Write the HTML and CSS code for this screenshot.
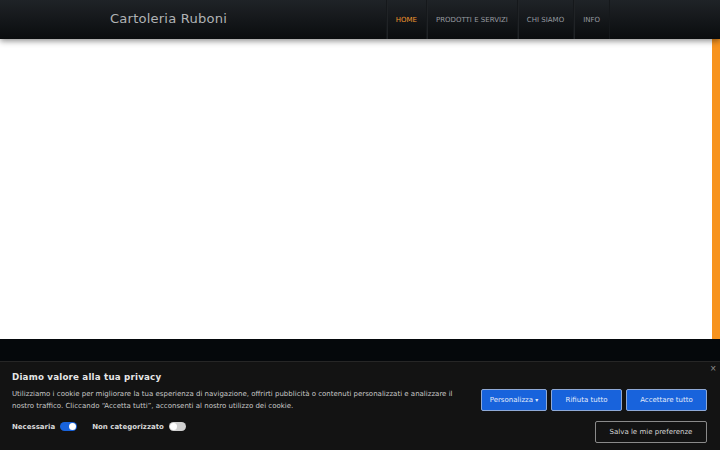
FILE: index.html
```html
<!DOCTYPE html>
<html lang="it">
  <head>
    <meta charset="utf-8">
    <title>Cartoleria Ruboni</title>
    <meta name="viewport" content="width=device-width">
    <link rel="stylesheet" href="styles.css">
  </head>
  <body>
    <header class="top">
      <div class="wrap">
        <h1 class="brand">Cartoleria Ruboni</h1>
        <nav>
          <ul class="menu">
            <li class="active"><a href="#">Home</a></li>
            <li><a href="#">Prodotti e servizi</a></li>
            <li><a href="#">Chi siamo</a></li>
            <li><a href="#">Info</a></li>
          </ul>
        </nav>
      </div>
    </header>

    <main class="page"></main>

    <footer class="bottom"></footer>

    <!-- cookie consent bar -->
    <div class="consent">
      <button class="consent-close" aria-label="Chiudi">&times;</button>
      <div class="consent-text">
        <h2>Diamo valore alla tua privacy</h2>
        <p>Utilizziamo i cookie per migliorare la tua esperienza di navigazione, offrirti pubblicità o contenuti personalizzati e analizzare il nostro traffico. Cliccando “Accetta tutti”, acconsenti al nostro utilizzo dei cookie.</p>
        <div class="prefs">
          <label class="pref">Necessaria <span class="switch on"></span></label>
          <label class="pref">Non categorizzato <span class="switch"></span></label>
        </div>
      </div>
      <div class="consent-actions">
        <div class="row">
          <button class="btn blue">Personalizza <span class="caret">&#9662;</span></button>
          <button class="btn blue">Rifiuta tutto</button>
          <button class="btn blue">Accettare tutto</button>
        </div>
        <div class="row">
          <button class="btn outline">Salva le mie preferenze</button>
        </div>
      </div>
    </div>
  </body>
</html>
```

FILE: styles.css
```css
body {
  margin: 0;
  padding: 0;
  font-family: "DejaVu Sans", sans-serif;
  background-color: #05080b;
}

/* top bar */
.top {
  height: 39px;
  background: linear-gradient(#1f2327, #0a0c0e);
  position: relative;
  z-index: 2;
  box-shadow: 0 2px 6px rgba(0, 0, 0, 0.45);
}

.wrap {
  width: 500px;
  margin: 0 auto;
  display: flex;
  justify-content: space-between;
  align-items: stretch;
  height: 100%;
}

.brand {
  margin: 0;
  font-size: 13.1px;
  font-weight: normal;
  color: #b0b3b5;
  line-height: 38px;
  letter-spacing: 0.2px;
}

.menu {
  list-style: none;
  margin: 0;
  padding: 0;
  display: flex;
  height: 100%;
}

.menu li {
  display: flex;
  align-items: center;
  border-left: 1px solid #15181b;
  box-shadow: inset 1px 0 0 #202326;
}

.menu li:last-child {
  border-right: 1px solid #15181b;
}

.menu a {
  display: block;
  padding: 0 9px;
  font-size: 7px;
  text-transform: uppercase;
  text-decoration: none;
  color: #979ba0;
}

.menu .active a {
  color: #f0962e;
}

/* white page body with the orange strip on the right */
.page {
  height: 300px;
  background-color: #fff;
  border-right: 8px solid #f7931e;
}

.bottom {
  height: 111px;
  background-color: #05080b;
}

/* cookie consent */
.consent {
  position: fixed;
  left: 0;
  right: 0;
  bottom: 0;
  height: 89px;
  background-color: #131313;
  border-top: 1px solid #262626;
  display: flex;
  justify-content: space-between;
  padding: 0 13px 0 12px;
  box-sizing: border-box;
  color: #c9c9c9;
}

.consent-close {
  position: absolute;
  top: 1px;
  right: 4px;
  background: none;
  border: none;
  color: #8d8d8d;
  font-size: 10px;
  padding: 0;
  cursor: pointer;
}

.consent-text {
  width: 450px;
  padding-top: 10px;
}

.consent-text h2 {
  margin: 0 0 6px;
  font-size: 8.7px;
  font-weight: bold;
  color: #e6e6e6;
  letter-spacing: 0.2px;
}

.consent-text p {
  margin: 0;
  font-size: 7px;
  line-height: 12px;
  color: #c8c8c8;
}

.prefs {
  display: flex;
  gap: 15px;
  margin-top: 10px;
}

.pref {
  display: flex;
  align-items: center;
  gap: 5px;
  font-size: 7px;
  font-weight: bold;
  color: #d9d9d9;
}

.switch {
  width: 17px;
  height: 9px;
  border-radius: 5px;
  background-color: #d0d0d0;
  position: relative;
}

.switch::after {
  content: "";
  position: absolute;
  top: 1px;
  left: 1px;
  width: 7px;
  height: 7px;
  border-radius: 50%;
  background-color: #fff;
}

.switch.on {
  background-color: #1863dc;
}

.switch.on::after {
  left: 9px;
}

.consent-actions {
  display: flex;
  flex-direction: column;
  align-items: flex-end;
  gap: 10px;
  padding-top: 27px;
}

.row {
  display: flex;
  gap: 4px;
}

.btn {
  height: 22px;
  font-family: "DejaVu Sans", sans-serif;
  font-size: 7px;
  padding: 0 6px;
  border-radius: 2px;
  white-space: nowrap;
  cursor: pointer;
}

.btn.blue {
  background-color: #1863dc;
  border: 1px solid #8fa9d6;
  color: #e4ecfa;
}

.row .btn.blue:nth-child(1) {
  width: 66px;
}

.row .btn.blue:nth-child(2) {
  width: 71px;
}

.row .btn.blue:nth-child(3) {
  width: 81px;
}

.caret {
  font-size: 6px;
}

.btn.outline {
  width: 112px;
  background-color: transparent;
  border: 1.5px solid #8a8a8a;
  color: #d6d6d6;
}
```
